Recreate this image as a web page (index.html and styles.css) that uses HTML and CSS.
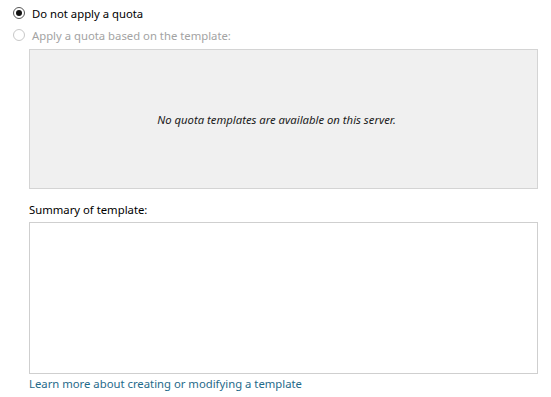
FILE: index.html
```html
<!DOCTYPE html>
<html lang="en">
<head>
    <meta charset="UTF-8">
    <title>Quota</title>
    <link rel="stylesheet" href="styles.css">
</head>
<body>
    <div class="panel">
        <label class="option">
            <input type="radio" name="quota" checked>
            <span>Do not apply a quota</span>
        </label>
        <label class="option disabled">
            <input type="radio" name="quota" disabled>
            <span>Apply a quota based on the template:</span>
        </label>

        <div class="indent">
            <div class="template-list">
                <span>No quota templates are available on this server.</span>
            </div>

            <div class="summary-label">Summary of template:</div>
            <div class="summary"></div>

            <a class="help-link" href="#">Learn more about creating or modifying a template</a>
        </div>
    </div>
</body>
</html>
```

FILE: styles.css
```css
body {
    margin: 0;
    background: #fff;
    font-family: 'Noto Sans', 'Open Sans', sans-serif;
    font-size: 11.3px;
    color: #000;
}
.panel {
    padding: 2px 13px 0 12px;
}
.option {
    display: flex;
    align-items: center;
    height: 22px;
    gap: 7px;
}
.option input {
    appearance: none;
    -webkit-appearance: none;
    margin: 0 0 0 1px;
    width: 12px;
    height: 12px;
    border: 1px solid #555;
    border-radius: 50%;
    background: #fff;
    box-sizing: border-box;
    display: grid;
    place-items: center;
}
.option input:checked::after {
    content: "";
    width: 6px;
    height: 6px;
    border-radius: 50%;
    background: #111;
}
.option.disabled {
    color: #a3a3a3;
}
.option.disabled input {
    border-color: #c8c8c8;
}
.indent {
    padding-left: 17px;
    padding-top: 3px;
}
.template-list {
    height: 138px;
    background: #f0f0f0;
    border: 1px solid #d4d4d4;
    display: flex;
    align-items: center;
    justify-content: center;
    font-style: italic;
    color: #1a1a1a;
    padding-right: 14px;
}
.summary-label {
    margin-top: 13px;
    height: 20px;
}
.summary {
    height: 150px;
    border: 1px solid #cfcfcf;
    background: #fff;
}
.help-link {
    display: block;
    margin-top: 2px;
    color: #1f6a8a;
    text-decoration: none;
}
```
